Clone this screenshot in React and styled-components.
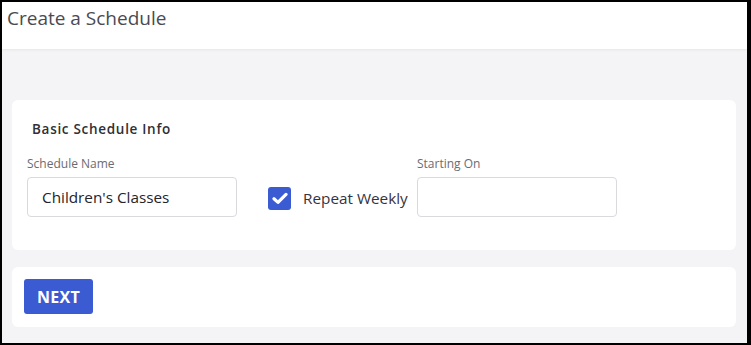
import { useState } from "react";
import styled, { createGlobalStyle } from "styled-components";

const GlobalStyle = createGlobalStyle`
  html, body {
    margin: 0;
    padding: 0;
    background: #000;
  }
  body {
    font-family: "Open Sans", Lato, sans-serif;
  }
`;

const Frame = styled.div`
  box-sizing: border-box;
  width: 751px;
  height: 345px;
  border: 2px solid #000;
  border-right-width: 4px;
  background: #f4f4f6;
  display: flex;
  flex-direction: column;
  overflow: hidden;
`;

const Header = styled.header`
  height: 47px;
  flex-shrink: 0;
  background: #fff;
  box-shadow: 0 1px 3px rgba(0, 0, 0, 0.06);
  padding: 3px 5px 0;
  box-sizing: border-box;
`;

const Title = styled.h1`
  margin: 0;
  font-size: 19px;
  font-weight: 400;
  color: #4a4a52;
  line-height: 26px;
`;

const Body = styled.main`
  display: flex;
  flex-direction: column;
  gap: 17px;
  padding: 51px 11px 0 10px;
`;

const Card = styled.section`
  background: #fff;
  border-radius: 6px;
  padding: ${(p) => p.$pad};
  height: ${(p) => p.$height}px;
  box-sizing: border-box;
`;

const CardTitle = styled.h2`
  margin: 0 0 18px 5px;
  font-size: 13.5px;
  font-weight: 600;
  letter-spacing: 0.7px;
  color: #2f2f36;
  line-height: 18px;
`;

const Row = styled.div`
  display: flex;
  align-items: flex-end;
`;

const Field = styled.label`
  display: flex;
  flex-direction: column;
  gap: 6px;
  width: ${(p) => p.$width}px;
`;

const FieldLabel = styled.span`
  font-size: 12px;
  color: #6b6b73;
  line-height: 15px;
`;

const Input = styled.input`
  box-sizing: border-box;
  height: 40px;
  width: 100%;
  border: 1px solid #d9d9de;
  border-radius: 4px;
  padding: 0 14px;
  font-family: inherit;
  font-size: 15.3px;
  color: #24242b;
  outline: none;
`;

const CheckGroup = styled.label`
  display: flex;
  align-items: center;
  gap: 12px;
  height: 40px;
  width: 149px;
  margin-left: 31px;
  margin-bottom: -1px;
  cursor: pointer;
  font-size: 15.3px;
  color: #34343c;
  white-space: nowrap;
`;

const Box = styled.span`
  width: 23px;
  height: 23px;
  flex-shrink: 0;
  border-radius: 3px;
  background: ${(p) => (p.$checked ? "#3a5bd1" : "#fff")};
  border: ${(p) => (p.$checked ? "none" : "1px solid #bbb")};
  display: flex;
  align-items: center;
  justify-content: center;
`;

const Button = styled.button`
  width: 69px;
  height: 35px;
  border: none;
  border-radius: 3px;
  background: #3a5bd1;
  color: #fff;
  font-family: inherit;
  font-weight: 700;
  font-size: 16px;
  letter-spacing: 0.3px;
  cursor: pointer;
`;

const App = () => {
  const [name, setName] = useState("Children's Classes");
  const [start, setStart] = useState("");
  const [weekly, setWeekly] = useState(true);

  return (
    <>
      <GlobalStyle />
      <Frame>
        <Header>
          <Title>Create a Schedule</Title>
        </Header>
        <Body>
          <Card $pad="20px 15px" $height={150}>
            <CardTitle>Basic Schedule Info</CardTitle>
            <Row>
              <Field $width={210}>
                <FieldLabel>Schedule Name</FieldLabel>
                <Input value={name} onChange={(e) => setName(e.target.value)} />
              </Field>
              <CheckGroup onClick={() => setWeekly(!weekly)}>
                <Box $checked={weekly}>
                  {weekly && (
                    <svg width="16" height="13" viewBox="0 0 16 13">
                      <path
                        d="M2 6.8 L6 10.4 L14 2.4"
                        fill="none"
                        stroke="#fff"
                        strokeWidth="3.2"
                        strokeLinecap="round"
                        strokeLinejoin="round"
                      />
                    </svg>
                  )}
                </Box>
                Repeat Weekly
              </CheckGroup>
              <Field $width={200}>
                <FieldLabel>Starting On</FieldLabel>
                <Input value={start} onChange={(e) => setStart(e.target.value)} />
              </Field>
            </Row>
          </Card>
          <Card $pad="12px 12px" $height={60}>
            <Button>NEXT</Button>
          </Card>
        </Body>
      </Frame>
    </>
  );
};

export default App;
